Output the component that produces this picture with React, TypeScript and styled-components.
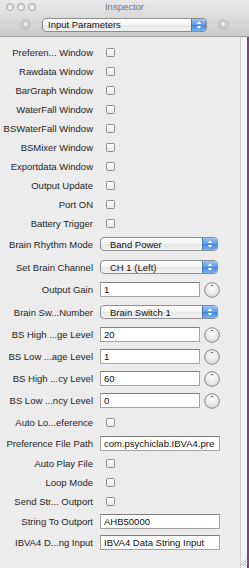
import * as React from 'react'
import styled, { createGlobalStyle } from 'styled-components'

const GlobalStyle = createGlobalStyle`
  html, body {
    margin: 0;
    padding: 0;
    background: #ececec;
  }
  body {
    font-family: 'Liberation Sans', Arial, sans-serif;
  }
`

const Window = styled.div`
  position: relative;
  display: flex;
  flex-direction: column;
  width: 249px;
  height: 568px;
  overflow: hidden;
  background: #ececec;
`

const Header = styled.div`
  display: flex;
  flex-direction: column;
  height: 36px;
  border-bottom: 1px solid #a4a4a4;
  background: linear-gradient(#e9e9e9, #dcdcdc 45%, #cacaca);
`

const TitleBar = styled.div`
  display: grid;
  grid-template-columns: 1fr auto 1fr;
  align-items: center;
  height: 13px;
  padding: 0 6px;
`

const Lights = styled.div`
  display: flex;
  gap: 3px;
`

const Light = styled.span`
  box-sizing: border-box;
  width: 8px;
  height: 8px;
  border-radius: 50%;
  border: 1px solid #a6a6a6;
  background: radial-gradient(circle at 50% 70%, #f6f6f6, #d3d3d3);
`

const Title = styled.span`
  font-size: 9.5px;
  color: #767676;
`

const Toolbar = styled.div`
  display: flex;
  align-items: center;
  height: 23px;
  padding-left: 20px;
  gap: 11px;
`

const NavButton = styled.span<{ $dir: 'left' | 'right' }>`
  position: relative;
  width: 11px;
  height: 11px;
  border-radius: 50%;
  background: radial-gradient(circle at 50% 40%, #d2d2d2, #bdbdbd);

  &::after {
    content: '';
    position: absolute;
    top: 3px;
    left: ${({ $dir }) => ($dir === 'left' ? '3px' : '4px')};
    border-top: 2.5px solid transparent;
    border-bottom: 2.5px solid transparent;
    ${({ $dir }) =>
      $dir === 'left'
        ? 'border-right: 4px solid #f4f4f4;'
        : 'border-left: 4px solid #f4f4f4;'}
  }
`

const Body = styled.div`
  display: flex;
  flex: 1;
  min-height: 0;
`

const Content = styled.div`
  width: 240px;
  padding-top: 5.5px;
`

const Gutter = styled.div`
  box-sizing: border-box;
  width: 7px;
  border-left: 1px solid #cdcdcd;
  background: #f2f2f2;
`

const DesktopEdge = styled.div`
  flex: 1;
  background: #82447e;
`

const Row = styled.div<{ $h: number }>`
  display: grid;
  grid-template-columns: 93px 1fr;
  column-gap: 7px;
  align-items: center;
  height: ${({ $h }) => $h}px;
`

const Label = styled.span`
  text-align: right;
  white-space: nowrap;
  font-size: 9.5px;
  color: #1e1e1e;
`

const Checkbox = styled.span`
  box-sizing: border-box;
  display: block;
  width: 9px;
  height: 9px;
  margin-left: 6px;
  border: 1px solid #8e8e8e;
  border-radius: 1.5px;
  background: linear-gradient(#ffffff, #e9e9e9);
`

const PopupBox = styled.div<{ $w: number; $pad: number }>`
  box-sizing: border-box;
  display: flex;
  align-items: center;
  width: ${({ $w }) => $w}px;
  height: 14px;
  border: 1px solid #8d8d8d;
  border-radius: 4px;
  background: linear-gradient(#ffffff, #f5f5f5 50%, #e6e6e6 51%, #f3f3f3);
  overflow: hidden;
`

const PopupText = styled.span<{ $pad: number }>`
  flex: 1;
  padding-left: ${({ $pad }) => $pad}px;
  font-size: 9.5px;
  color: #111;
  white-space: nowrap;
`

const PopupArrows = styled.span`
  display: flex;
  align-items: center;
  justify-content: center;
  width: 14px;
  height: 100%;
  border-left: 1px solid #4b78b5;
  background: linear-gradient(#9cc4f2, #5d9be6 50%, #3d84e0 51%, #7ab2ee);
`

const Field = styled.div<{ $w: number }>`
  box-sizing: border-box;
  width: ${({ $w }) => $w}px;
  height: 15px;
  padding-left: 3px;
  border: 1px solid #a3a3a3;
  border-top-color: #7e7e7e;
  background: #fff;
  font-size: 9.5px;
  line-height: 13px;
  color: #111;
  white-space: nowrap;
  overflow: hidden;
`

const FieldGroup = styled.div`
  display: flex;
  align-items: center;
  gap: 4px;
`

const Grip = styled.svg`
  position: absolute;
  right: 1px;
  bottom: 1px;
`

const Arrows = () => (
  <svg width="8" height="10" viewBox="0 0 8 10">
    <path d="M4 1.2 L6.4 4 L1.6 4 Z" fill="#fff" />
    <path d="M4 8.8 L6.4 6 L1.6 6 Z" fill="#fff" />
  </svg>
)

const Popup = ({ value, width, pad }: { value: string; width: number; pad: number }) => (
  <PopupBox $w={width} $pad={pad}>
    <PopupText $pad={pad}>{value}</PopupText>
    <PopupArrows>
      <Arrows />
    </PopupArrows>
  </PopupBox>
)

const Knob = () => (
  <svg width="16" height="16" viewBox="0 0 16 16">
    <defs>
      <radialGradient id="knobFill" cx="50%" cy="35%" r="65%">
        <stop offset="0" stopColor="#ffffff" />
        <stop offset="1" stopColor="#dadada" />
      </radialGradient>
    </defs>
    <circle cx="8" cy="8" r="7.3" fill="url(#knobFill)" stroke="#7c7c7c" strokeWidth="0.9" />
    <path d="M6.8 4.3 L8 3 L9.2 4.3" fill="none" stroke="#3c3c3c" strokeWidth="0.8" />
  </svg>
)

type Item =
  | { label: string; kind: 'check'; h?: number }
  | { label: string; kind: 'popup'; value: string }
  | { label: string; kind: 'knob'; value: string }
  | { label: string; kind: 'text'; value: string }

const items: Item[] = [
  { label: 'Preferen... Window', kind: 'check' },
  { label: 'Rawdata Window', kind: 'check' },
  { label: 'BarGraph Window', kind: 'check' },
  { label: 'WaterFall Window', kind: 'check' },
  { label: 'BSWaterFall Window', kind: 'check' },
  { label: 'BSMixer Window', kind: 'check' },
  { label: 'Exportdata Window', kind: 'check' },
  { label: 'Output Update', kind: 'check' },
  { label: 'Port ON', kind: 'check' },
  { label: 'Battery Trigger', kind: 'check' },
  { label: 'Brain Rhythm Mode', kind: 'popup', value: 'Band Power' },
  { label: 'Set Brain Channel', kind: 'popup', value: 'CH 1 (Left)' },
  { label: 'Output Gain', kind: 'knob', value: '1' },
  { label: 'Brain Sw...Number', kind: 'popup', value: 'Brain Switch 1' },
  { label: 'BS High ...ge Level', kind: 'knob', value: '20' },
  { label: 'BS Low ...age Level', kind: 'knob', value: '1' },
  { label: 'BS High ...cy Level', kind: 'knob', value: '60' },
  { label: 'BS Low ...ncy Level', kind: 'knob', value: '0' },
  { label: 'Auto Lo...eference', kind: 'check', h: 21 },
  { label: 'Preference File Path', kind: 'text', value: 'com.psychiclab.IBVA4.pre' },
  { label: 'Auto Play File', kind: 'check' },
  { label: 'Loop Mode', kind: 'check' },
  { label: 'Send Str... Outport', kind: 'check' },
  { label: 'String To Outport', kind: 'text', value: 'AHB50000' },
  { label: 'IBVA4 D...ng Input', kind: 'text', value: 'IBVA4 Data String Input' },
]

const rowHeight = (item: Item) => {
  if (item.kind === 'check') return item.h ?? 19
  if (item.kind === 'popup') return 23
  if (item.kind === 'knob') return 22
  return 21
}

const Control = ({ item }: { item: Item }) => {
  switch (item.kind) {
    case 'check':
      return <Checkbox />
    case 'popup':
      return <Popup value={item.value} width={118} pad={9} />
    case 'knob':
      return (
        <FieldGroup>
          <Field $w={100}>{item.value}</Field>
          <Knob />
        </FieldGroup>
      )
    default:
      return <Field $w={120}>{item.value}</Field>
  }
}

export default function App() {
  return (
    <>
      <GlobalStyle />
      <Window>
        <Header>
          <TitleBar>
            <Lights>
              <Light />
              <Light />
              <Light />
            </Lights>
            <Title>Inspector</Title>
            <span />
          </TitleBar>
          <Toolbar>
            <NavButton $dir="left" />
            <Popup value="Input Parameters" width={165} pad={5} />
            <NavButton $dir="right" />
          </Toolbar>
        </Header>
        <Body>
          <Content>
            {items.map((item) => (
              <Row key={item.label} $h={rowHeight(item)}>
                <Label>{item.label}</Label>
                <div>
                  <Control item={item} />
                </div>
              </Row>
            ))}
          </Content>
          <Gutter />
          <DesktopEdge />
        </Body>
        <Grip width="10" height="10" viewBox="0 0 10 10">
          <path d="M9 2 L2 9 M9 5 L5 9 M9 8 L8 9" stroke="#9a9a9a" strokeWidth="0.8" />
          <path d="M9.6 2.6 L2.6 9.6 M9.6 5.6 L5.6 9.6" stroke="#fff" strokeWidth="0.6" />
        </Grip>
      </Window>
    </>
  )
}
